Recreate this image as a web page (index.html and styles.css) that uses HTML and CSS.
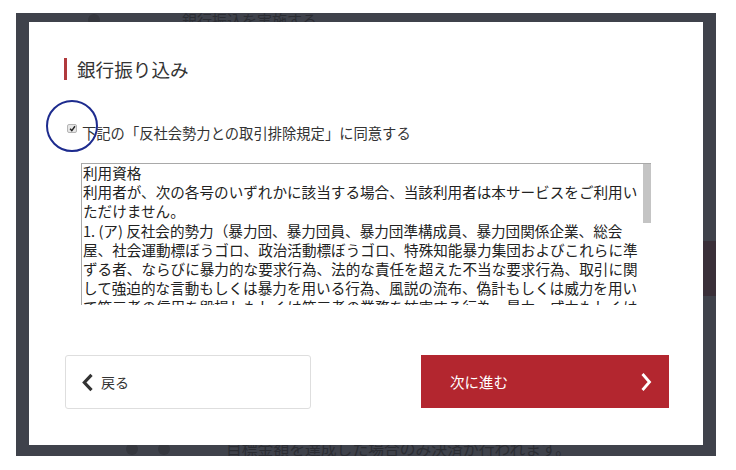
FILE: index.html
```html
<!DOCTYPE html>
<html lang="ja">
<head>
<meta charset="utf-8">
<link rel="stylesheet" href="styles.css">
</head>
<body>
<div class="page">
  <div class="backdrop">
    <div class="bg-top"><span class="bg-dot"></span><span class="bg-text">銀行振込を実施する</span></div>
    <div class="bg-band"></div>
    <div class="bg-bottom"><span class="bg-dot"></span><span class="bg-dot"></span><span class="bg-text">目標金額を達成した場合のみ決済が行われます。</span></div>
  </div>
  <div class="modal">
    <h2 class="title">銀行振り込み</h2>
    <label class="agree">
      <span class="check"><svg viewBox="0 0 10 10" width="7" height="7"><path d="M1.5 5.5 L4 8 L8.5 1.8" fill="none" stroke="#222" stroke-width="2"/></svg></span>
      <span class="agree-text">下記の「反社会勢力との取引排除規定」に同意する</span>
    </label>
    <div class="terms">
      <div class="terms-text">利用資格<br>利用者が、次の各号のいずれかに該当する場合、当該利用者は本サービスをご利用い<br>ただけません。<br>1. (ア) 反社会的勢力（暴力団、暴力団員、暴力団準構成員、暴力団関係企業、総会<br>屋、社会運動標ぼうゴロ、政治活動標ぼうゴロ、特殊知能暴力集団およびこれらに準<br>ずる者、ならびに暴力的な要求行為、法的な責任を超えた不当な要求行為、取引に関<br>して強迫的な言動もしくは暴力を用いる行為、風説の流布、偽計もしくは威力を用い<br>て第三者の信用を毀損しもしくは第三者の業務を妨害する行為、暴力、威力もしくは</div>
      <div class="thumb"></div>
    </div>
    <div class="actions">
      <button class="btn btn-back"><svg class="chev" viewBox="0 0 12 18" width="13" height="19"><path d="M9.8 1.8 L3 9 L9.8 16.2" fill="none" stroke="#333" stroke-width="3"/></svg><span>戻る</span></button>
      <button class="btn btn-next"><span>次に進む</span><svg class="chev" viewBox="0 0 12 20" width="12" height="20"><path d="M2.5 2 L9.5 10 L2.5 18" fill="none" stroke="#fff" stroke-width="2.8"/></svg></button>
    </div>
    <div class="ring"></div>
  </div>
</div>
</body>
</html>
```
FILE: styles.css
```css
* { box-sizing: border-box; }
html, body { margin: 0; padding: 0; background: #fff; }
body { font-family: "Noto Sans CJK JP", "Noto Sans", sans-serif; color: #333; }
.page { position: relative; width: 736px; height: 470px; overflow: hidden; }
.backdrop {
  position: absolute; left: 16px; top: 13px; width: 700px; height: 443px;
  background: #3f424b; overflow: hidden;
}
.bg-top { position: absolute; left: 72px; top: -4px; display: flex; align-items: center; gap: 82px; }
.bg-bottom { position: absolute; left: 110px; top: 424px; display: flex; align-items: center; gap: 20px; }
.bg-text { font-size: 15px; color: #2b2d33; white-space: nowrap; }
.bg-bottom .bg-text { font-size: 15.8px; }
.bg-dot { width: 12px; height: 12px; border-radius: 50%; background: #35373e; }
.bg-bottom .bg-dot:nth-child(2) { margin-right: 36px; }
.bg-band { position: absolute; left: 687px; top: 228px; width: 13px; height: 55px; background: #3a3039; }
.modal {
  position: absolute; left: 29px; top: 22px; width: 674px; height: 423px;
  background: #fff; padding: 36px 34px 0 35px;
}
.title {
  margin: 0; font-size: 18.6px; font-weight: normal; color: #333;
  border-left: 3px solid #b03a3d; padding-left: 10px; line-height: 22px; height: 22px;
}
.agree { display: flex; align-items: flex-start; margin: 41px 0 0 3px; font-size: 14.3px; color: #333; }
.check {
  width: 10px; height: 9px; margin-top: 3px; border: 1px solid #b5b5b5; border-radius: 2px;
  background: #e6e6e6; display: flex; align-items: center; justify-content: center;
}
.agree-text { margin-left: 5px; line-height: 20px; margin-top: 2px; }
.terms {
  position: relative; margin: 20px 0 0 17px; width: 570px; height: 142px; overflow: hidden;
  border-top: 1px solid #a9a9a9; border-left: 1px solid #a9a9a9;
}
.terms-text { font-size: 14.6px; line-height: 19.2px; color: #222; padding-left: 1px; white-space: nowrap; margin-top: -1px; }
.thumb { position: absolute; right: 0; top: 0; width: 8px; height: 59px; background: #c4c4c4; }
.actions { display: flex; justify-content: space-between; margin-top: 50px; padding-left: 1px; padding-right: 0; }
.btn {
  font-family: inherit; font-size: 14px; height: 54px; border-radius: 3px; display: flex;
  align-items: center; cursor: pointer;
}
.btn-back { width: 246px; background: #fff; border: 1px solid #dedede; color: #333; padding: 0 0 0 15px; gap: 7px; }
.btn-next {
  width: 248px; height: 53px; background: #b3262f; border: none; border-radius: 0; color: #fff;
  justify-content: space-between; padding: 0 17px 0 29px; font-size: 14.5px;
}
.ring {
  position: absolute; left: 17px; top: 78px; width: 52px; height: 52px; border-radius: 50%;
  border: 2.5px solid #1d2b8e;
}
```
